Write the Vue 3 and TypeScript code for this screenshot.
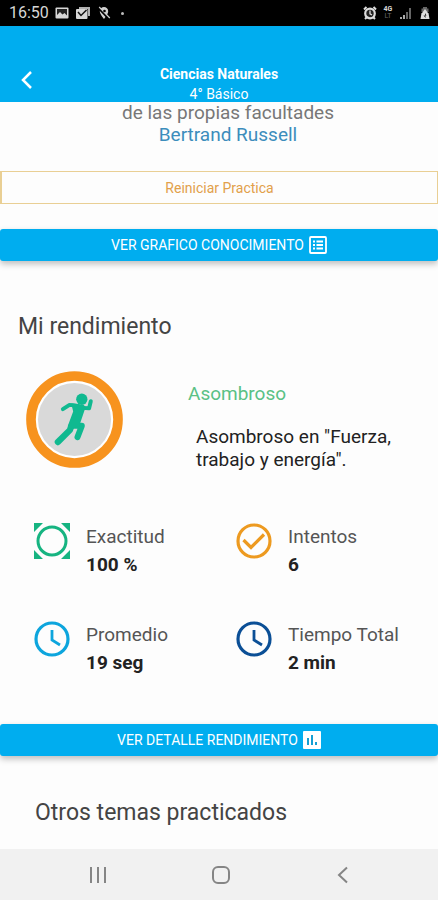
<script setup lang="ts">
type IconName = 'target' | 'check' | 'clock'

interface Stat {
  icon: IconName
  tone: string
  label: string
  value: string
}

const stats: Stat[] = [
  { icon: 'target', tone: 'green', label: 'Exactitud', value: '100 %' },
  { icon: 'check', tone: 'orange', label: 'Intentos', value: '6' },
  { icon: 'clock', tone: 'sky', label: 'Promedio', value: '19 seg' },
  { icon: 'clock', tone: 'navy', label: 'Tiempo Total', value: '2 min' },
]
</script>

<template>
  <div class="screen">
    <div class="status">
      <div class="status-group">
        <span class="time">16:50</span>
        <svg class="status-icon" viewBox="0 0 14 14" aria-hidden="true">
          <rect x="0.5" y="1.5" width="13" height="11" rx="1" fill="#d6d6d6" />
          <rect x="2" y="3" width="10" height="8" fill="#222" />
          <path d="M2 11V9l3-3 2.500 2.500L9.500 7 12 9.500V11z" fill="#d6d6d6" />
        </svg>
        <svg class="status-icon wide" viewBox="0 0 16 14" aria-hidden="true">
          <path d="M4 1h11v9h-2V3H4z" fill="#b0b0b0" />
          <rect x="1" y="3" width="11.500" height="10" rx="1" fill="#d6d6d6" />
          <path d="M3 6l3 3.500L11.500 4" fill="none" stroke="#111" stroke-width="1.500" />
        </svg>
        <svg class="status-icon" viewBox="0 0 14 14" aria-hidden="true">
          <path d="M7 1a4.200 4.200 0 0 1 4.200 4.200C11.200 8 7 13 7 13S2.800 8 2.800 5.200A4.200 4.200 0 0 1 7 1z" fill="#d0d0d0" />
          <path d="M1 1.500L12 13" stroke="#000" stroke-width="2.200" />
          <path d="M2.200 1L12.800 12" stroke="#d0d0d0" stroke-width="1.200" />
          <circle cx="7.500" cy="5" r="1.300" fill="#000" />
        </svg>
        <span class="dot"></span>
      </div>
      <div class="status-group right">
        <svg class="status-icon" viewBox="0 0 14 14" aria-hidden="true">
          <circle cx="7" cy="7.500" r="4.800" fill="#222" stroke="#ddd" stroke-width="2.200" />
          <path d="M1 3.500L3.500 1M13 3.500L10.500 1M3.500 11.500L2 13M10.500 11.500L12 13" stroke="#ddd" stroke-width="2" />
          <path d="M7 4.500v3.300l2 1.200" fill="none" stroke="#ddd" stroke-width="1.300" />
        </svg>
        <span class="network"><b>4G</b><i>LT</i></span>
        <svg class="status-icon" viewBox="0 0 14 14" aria-hidden="true">
          <path d="M1 13v-2h2v2zM4 13V9h2v4z" fill="#aaa" />
          <path d="M7 13V6h2v7zM10 13V2h2v11z" fill="#666" />
        </svg>
        <svg class="status-icon" viewBox="0 0 14 14" aria-hidden="true">
          <path d="M5 1h4v1.500h1.500V6h-7V2.500H5z" fill="#666" />
          <path d="M7 3l3 4h-6zM3.500 7h7l1 6h-9z" fill="#ddd" />
          <path d="M7 7l1.500 2.500H7.500V12L5.500 9.500H7z" fill="#222" />
        </svg>
      </div>
    </div>

    <header class="header">
      <button class="back" type="button" aria-label="Volver">
        <svg viewBox="0 0 12 20" aria-hidden="true">
          <path d="M10 2L2 10l8 8" fill="none" stroke="#fff" stroke-width="2.500" />
        </svg>
      </button>
      <div class="heading">
        <h1>Ciencias Naturales</h1>
        <p>4° Básico</p>
      </div>
    </header>

    <main class="content">
      <blockquote class="quote">
        de las propias facultades
        <cite>Bertrand Russell</cite>
      </blockquote>

      <button class="restart" type="button">Reiniciar Practica</button>

      <button class="bar" type="button">
        VER GRAFICO CONOCIMIENTO
        <svg viewBox="0 0 18 18" aria-hidden="true">
          <rect x="1" y="1" width="16" height="16" rx="1" fill="none" stroke="#fff" stroke-width="1.800" />
          <path d="M4 5.500h2M4 9h2M4 12.500h2M7.500 5.500H14M7.500 9H14M7.500 12.500H14" stroke="#fff" stroke-width="2" />
        </svg>
      </button>

      <section class="performance">
        <h2 class="title">Mi rendimiento</h2>
        <div class="result">
          <svg class="badge" viewBox="0 0 292 292" aria-hidden="true">
            <circle cx="146" cy="146" r="131" fill="#fff" stroke="#f7931e" stroke-width="29" />
            <circle cx="146" cy="146" r="110" fill="#d9d9d9" />
            <g fill="none" stroke="#10b990" stroke-linecap="round" stroke-linejoin="round">
              <path d="M111 115L131 102L158 105" stroke-width="12" />
              <path d="M168 111L190 112L195 91" stroke-width="12" />
              <path d="M137 165L132 178L96 214" stroke-width="19" />
              <path d="M142 165L168 165L155 199" stroke-width="18" />
            </g>
            <path d="M136 97L174 102Q180 105 178 113L160 166L130 174Q124 172 126 165L142 122Z" fill="#10b990" />
            <circle cx="168" cy="85" r="17" fill="#10b990" />
          </svg>
          <div>
            <h3 class="grade">Asombroso</h3>
            <p class="detail">Asombroso en "Fuerza, trabajo y energía".</p>
          </div>
        </div>

        <dl class="stats">
          <div v-for="stat in stats" :key="stat.label" class="stat">
            <svg class="stat-icon" :class="stat.tone" viewBox="0 0 36 36" aria-hidden="true">
              <template v-if="stat.icon === 'target'">
                <circle cx="18" cy="18" r="14" fill="none" stroke="currentColor" stroke-width="3" />
                <path d="M0 0h9L0 9zM36 0v9L27 0zM0 36v-9l9 9zM36 36h-9l9-9z" fill="currentColor" />
              </template>
              <template v-else>
                <circle cx="18" cy="18" r="16" fill="none" stroke="currentColor" stroke-width="3.200" />
                <path v-if="stat.icon === 'check'" d="M7.500 17L15 24.500L28 11.500" fill="none" stroke="currentColor" stroke-width="3.200" />
                <path v-else d="M18 9v10l8 5" fill="none" stroke="currentColor" stroke-width="2.800" />
              </template>
            </svg>
            <div>
              <dt>{{ stat.label }}</dt>
              <dd>{{ stat.value }}</dd>
            </div>
          </div>
        </dl>
      </section>

      <button class="bar" type="button">
        VER DETALLE RENDIMIENTO
        <svg viewBox="0 0 18 18" aria-hidden="true">
          <rect width="18" height="18" rx="1" fill="#fff" />
          <path d="M5 7v7M9 4v10M13 11v3" stroke="#159fd3" stroke-width="2" />
        </svg>
      </button>

      <h2 class="title other">Otros temas practicados</h2>
    </main>

    <nav class="nav">
      <button type="button" aria-label="Recientes">
        <svg viewBox="0 0 20 20" aria-hidden="true">
          <path d="M3 2v16M10 2v16M17 2v16" stroke="#858585" stroke-width="2" />
        </svg>
      </button>
      <button type="button" aria-label="Inicio">
        <svg viewBox="0 0 20 20" aria-hidden="true">
          <rect x="2" y="2" width="16" height="16" rx="5" fill="none" stroke="#858585" stroke-width="2" />
        </svg>
      </button>
      <button type="button" aria-label="Atrás">
        <svg viewBox="0 0 20 20" aria-hidden="true">
          <path d="M14 2.500L6 10l8 7.500" fill="none" stroke="#858585" stroke-width="2" />
        </svg>
      </button>
    </nav>
  </div>
</template>

<style>
body {
  margin: 0;
  background: #fdfdfd;
}
</style>

<style scoped>
.screen {
  display: flex;
  flex-direction: column;
  min-height: 100vh;
  background: #fdfdfd;
  color: #444;
  font-family: Roboto, "Liberation Sans", sans-serif;
}

h1,
h2,
h3,
p,
dl,
dd,
blockquote {
  margin: 0;
}

button {
  border: 0;
  padding: 0;
  background: none;
  font-family: inherit;
  cursor: pointer;
}

svg {
  display: block;
}

.status {
  display: flex;
  justify-content: space-between;
  align-items: center;
  height: 26px;
  padding: 0 6px 0 9px;
  background: #000;
  color: #d6d6d6;
}

.status-group {
  display: flex;
  align-items: center;
  gap: 6px;
}

.status-group.right {
  gap: 5px;
}

.time {
  font-size: 16px;
  line-height: 26px;
}

.status-icon {
  width: 14px;
  height: 14px;
}

.status-icon.wide {
  width: 16px;
}

.dot {
  width: 3px;
  height: 3px;
  margin-left: 4px;
  border-radius: 50%;
  background: #bbb;
}

.network {
  display: grid;
  width: 12px;
  font-size: 7px;
  line-height: 7px;
  text-align: center;
}

.network i {
  color: #666;
  font-style: normal;
}

.header {
  display: grid;
  grid-template-columns: 54px 1fr 54px;
  align-items: end;
  height: 76px;
  background: #00adef;
  color: #fff;
  text-align: center;
}

.back {
  display: grid;
  place-items: center;
  height: 44px;
}

.back svg {
  width: 12px;
  height: 20px;
}

.heading {
  height: 38px;
}

.heading h1,
.heading p {
  font-size: 14px;
  line-height: 20px;
}

.heading h1 {
  font-weight: 700;
}

.content {
  display: flex;
  flex-direction: column;
}

.quote {
  padding: 0 16px;
  margin-left: 18px;
  color: #777;
  font-size: 19px;
  line-height: 22px;
  text-align: center;
}

.quote cite {
  display: block;
  color: #3c8dbc;
  font-style: normal;
}

.restart {
  height: 33px;
  margin-top: 25px;
  border: 1px solid #e9cf94;
  border-left-width: 2px;
  color: #e2a04a;
  font-size: 14px;
}

.bar {
  display: flex;
  justify-content: center;
  align-items: center;
  gap: 5px;
  height: 32px;
  margin-top: 25px;
  border-radius: 3px;
  background: #00adef;
  box-shadow: 0 3px 6px rgba(0, 0, 0, 0.25);
  color: #fff;
  font-size: 14px;
}

.bar svg {
  width: 18px;
  height: 18px;
}

.title {
  margin-top: 51px;
  padding: 0 18px;
  font-size: 23px;
  font-weight: 400;
  line-height: 30px;
}

.title.other {
  margin: 42px 0 20px;
  padding: 0 35px;
}

.result {
  display: grid;
  grid-template-columns: 97px 1fr;
  gap: 65px;
  margin-top: 29px;
  padding: 0 26px;
}

.badge {
  width: 97px;
  height: 97px;
}

.grade {
  margin-top: 11px;
  color: #5ac185;
  font-size: 19px;
  font-weight: 400;
  line-height: 24px;
}

.detail {
  margin-top: 19px;
  padding-left: 8px;
  color: #222;
  font-size: 19px;
  line-height: 23px;
}

.stats {
  display: grid;
  grid-template-columns: 1fr 1fr;
  row-gap: 42px;
  margin-top: 52px;
  padding-left: 34px;
}

.stat {
  display: flex;
  gap: 16px;
}

.stat-icon {
  width: 36px;
  height: 36px;
}

.green {
  color: #16b481;
}

.orange {
  color: #ed9a20;
}

.sky {
  color: #0da5dd;
}

.navy {
  color: #0b4f96;
}

.stat dt,
.stat dd {
  font-size: 19px;
  line-height: 28px;
}

.stat dt {
  color: #555;
}

.stat dd {
  color: #222;
  font-weight: 700;
}

.performance + .bar {
  margin-top: 47px;
}

.nav {
  display: flex;
  justify-content: space-between;
  align-items: center;
  height: 51px;
  margin-top: auto;
  padding: 0 71px 0 74px;
  background: #f1f1f1;
}

.nav button {
  display: grid;
  place-items: center;
  width: 48px;
  height: 48px;
}

.nav svg {
  width: 20px;
  height: 20px;
}
</style>
